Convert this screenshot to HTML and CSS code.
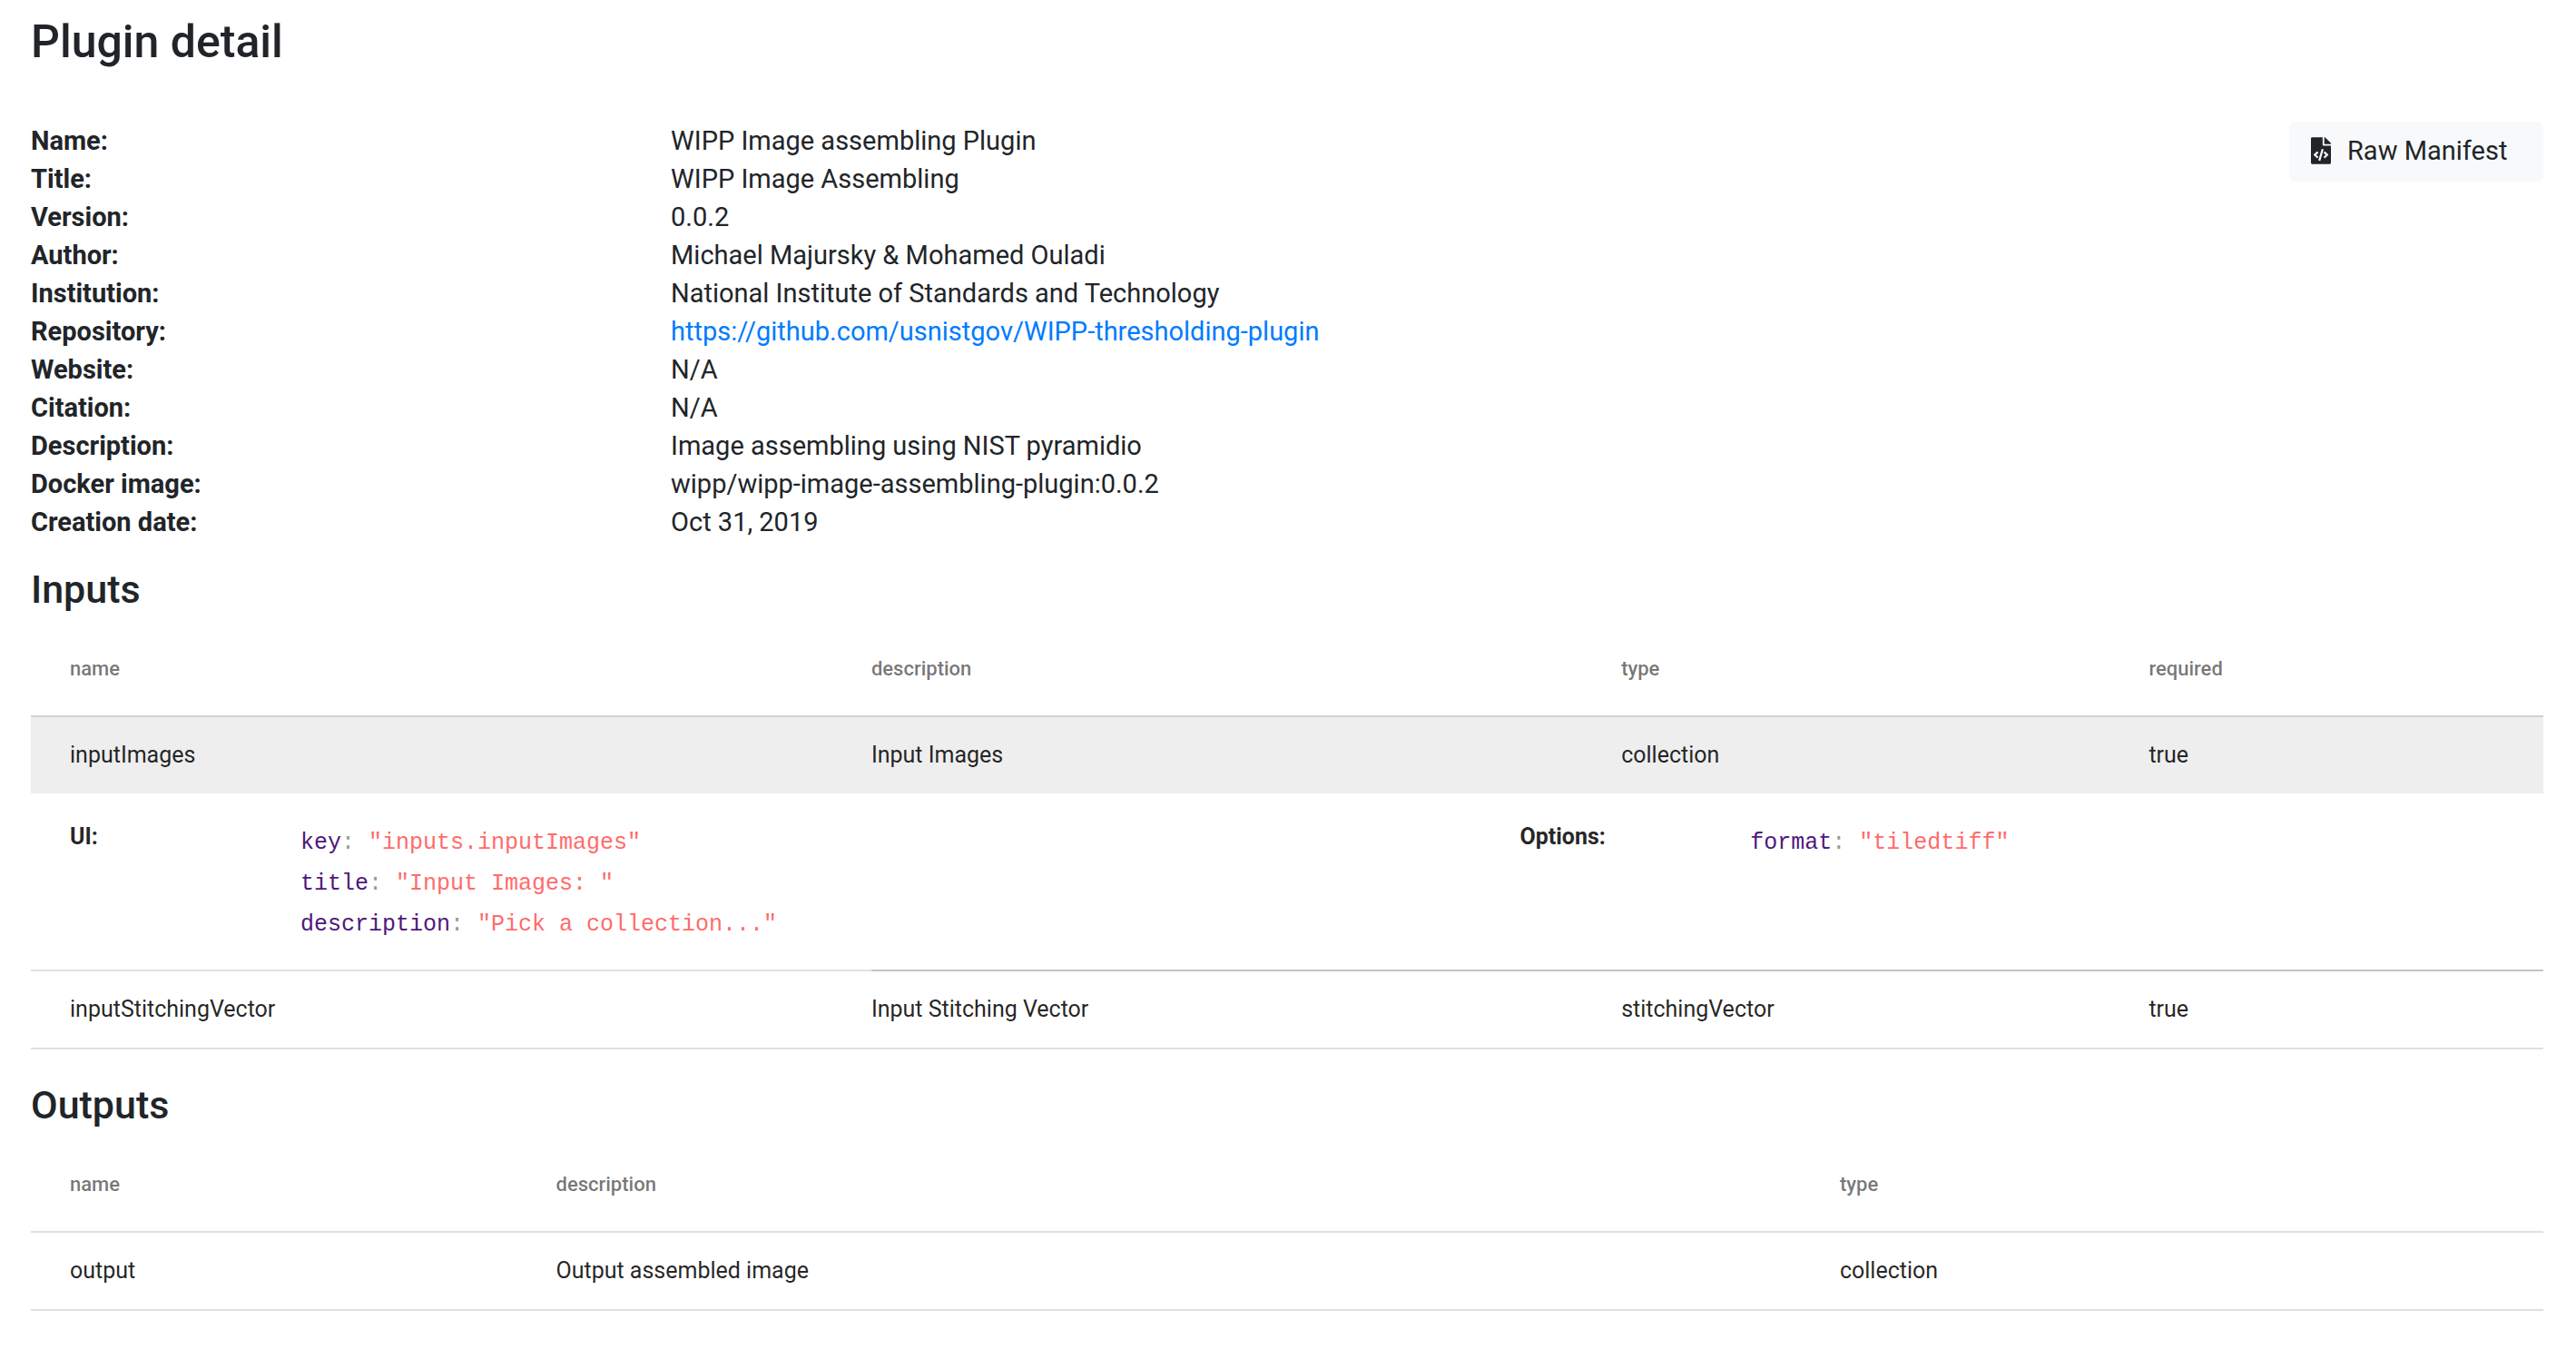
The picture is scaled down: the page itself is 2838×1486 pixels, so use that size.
FILE: index.html
```html
<!DOCTYPE html>
<html lang="en">
<head>
<meta charset="utf-8">
<title>Plugin detail</title>
<link rel="stylesheet" href="styles.css">
</head>
<body>
<main class="page">
  <h1 class="page-title">Plugin detail</h1>

  <section class="summary">
    <dl class="facts">
      <dt>Name:</dt><dd>WIPP Image assembling Plugin</dd>
      <dt>Title:</dt><dd>WIPP Image Assembling</dd>
      <dt>Version:</dt><dd>0.0.2</dd>
      <dt>Author:</dt><dd>Michael Majursky &amp; Mohamed Ouladi</dd>
      <dt>Institution:</dt><dd>National Institute of Standards and Technology</dd>
      <dt>Repository:</dt><dd><a class="link" href="https://github.com/usnistgov/WIPP-thresholding-plugin">https://github.com/usnistgov/WIPP-thresholding-plugin</a></dd>
      <dt>Website:</dt><dd>N/A</dd>
      <dt>Citation:</dt><dd>N/A</dd>
      <dt>Description:</dt><dd>Image assembling using NIST pyramidio</dd>
      <dt>Docker image:</dt><dd>wipp/wipp-image-assembling-plugin:0.0.2</dd>
      <dt>Creation date:</dt><dd>Oct 31, 2019</dd>
    </dl>
    <button class="manifest-button" type="button">
      <svg class="manifest-icon" viewBox="0 0 384 512" aria-hidden="true"><path fill="currentColor" d="M384 121.941V128H256V0h6.059c6.365 0 12.470 2.529 16.971 7.029l97.941 97.941A24.005 24.005 0 0 1 384 121.941zM248 160c-13.200 0-24-10.800-24-24V0H24C10.745 0 0 10.745 0 24v464c0 13.255 10.745 24 24 24h336c13.255 0 24-10.745 24-24V160H248zM123.206 400.505a5.400 5.400 0 0 1-7.633.246l-64.866-60.812a5.400 5.400 0 0 1 0-7.879l64.866-60.812a5.400 5.400 0 0 1 7.633.246l19.579 20.885a5.400 5.400 0 0 1-.372 7.747L101.650 336l40.763 35.874a5.400 5.400 0 0 1 .372 7.747l-19.579 20.884zm51.295 50.479l-27.453-7.970a5.402 5.402 0 0 1-3.681-6.692l61.440-211.626a5.402 5.402 0 0 1 6.692-3.681l27.452 7.970a5.400 5.400 0 0 1 3.680 6.692l-61.440 211.626a5.397 5.397 0 0 1-6.690 3.681zm160.792-111.045l-64.866 60.812a5.400 5.400 0 0 1-7.633-.246l-19.580-20.885a5.400 5.400 0 0 1 .372-7.747L284.350 336l-40.763-35.874a5.400 5.400 0 0 1-.372-7.747l19.580-20.885a5.400 5.400 0 0 1 7.633-.246l64.866 60.812a5.400 5.400 0 0 1-.001 7.879z"/></svg>
      Raw Manifest
    </button>
  </section>

  <section>
    <h2 class="section-title">Inputs</h2>
    <table class="data-table inputs">
      <colgroup><col class="in-name"><col class="in-description"><col class="in-type"><col></colgroup>
      <thead>
        <tr><th scope="col">name</th><th scope="col">description</th><th scope="col">type</th><th scope="col">required</th></tr>
      </thead>
      <tbody>
        <tr class="expanded"><td>inputImages</td><td>Input Images</td><td>collection</td><td>true</td></tr>
        <tr class="detail">
          <td colspan="4">
            <div class="detail-grid">
              <strong>UI:</strong>
              <div class="json">
                <div><span class="key">key</span><span class="colon">:</span> <span class="value">"inputs.inputImages"</span></div>
                <div><span class="key">title</span><span class="colon">:</span> <span class="value">"Input Images: "</span></div>
                <div><span class="key">description</span><span class="colon">:</span> <span class="value">"Pick a collection..."</span></div>
              </div>
              <strong>Options:</strong>
              <div class="json">
                <div><span class="key">format</span><span class="colon">:</span> <span class="value">"tiledtiff"</span></div>
              </div>
            </div>
          </td>
        </tr>
        <tr class="after-detail"><td>inputStitchingVector</td><td>Input Stitching Vector</td><td>stitchingVector</td><td>true</td></tr>
      </tbody>
    </table>
  </section>

  <section>
    <h2 class="section-title">Outputs</h2>
    <table class="data-table">
      <colgroup><col class="out-name"><col class="out-description"><col></colgroup>
      <thead>
        <tr><th scope="col">name</th><th scope="col">description</th><th scope="col">type</th></tr>
      </thead>
      <tbody>
        <tr><td>output</td><td>Output assembled image</td><td>collection</td></tr>
      </tbody>
    </table>
  </section>
</main>
</body>
</html>
```
FILE: styles.css
```css
* { box-sizing: border-box; }

body {
  margin: 0;
  background: #fff;
  color: #212529;
  font: 400 29px/42px Roboto, "Liberation Sans", sans-serif;
}

.page { padding: 16px 36px 40px 34px; }

.page-title {
  margin: 0 0 58px;
  font-size: 50px;
  font-weight: 500;
  line-height: 60px;
}

.summary {
  display: flex;
  align-items: flex-start;
  gap: 40px;
  margin-bottom: 28px;
}

.facts {
  flex: 1;
  display: grid;
  grid-template-columns: 28.8% 1fr;
  margin: 0;
}
.facts dt { font-weight: 700; }
.facts dd { margin: 0; }

.link { color: #007bff; text-decoration: none; }

.manifest-button {
  display: flex;
  align-items: center;
  gap: 18px;
  width: 280px;
  height: 66px;
  padding: 0 24px 2px;
  border: 0;
  border-radius: 7px;
  background: #f8f9fa;
  color: #212529;
  font: inherit;
}
.manifest-icon { width: 22px; height: 30px; }

.section-title {
  margin: 0 0 14px;
  font-size: 43px;
  font-weight: 500;
  line-height: 50px;
}

.data-table {
  width: 100%;
  margin-bottom: 36px;
  table-layout: fixed;
  border-collapse: separate;
  border-spacing: 0;
  color: rgba(0, 0, 0, .87);
  font-size: 25px;
  line-height: 36px;
}
.data-table th {
  height: 102px;
  padding: 0 0 2px;
  border-bottom: 2px solid #e0e0e0;
  color: rgba(0, 0, 0, .54);
  font-size: 22px;
  font-weight: 500;
  text-align: left;
}
.data-table td {
  height: 86px;
  padding: 0;
  border-bottom: 2px solid #e0e0e0;
}
.data-table th:first-child,
.data-table td:first-child { padding-left: 43px; }

.inputs th { border-bottom-color: #d1d1d1; }
.in-name { width: 33.45%; }
.in-description { width: 29.85%; }
.in-type { width: 21%; }
.out-name { width: 20.9%; }
.out-description { width: 51.1%; }

.data-table .expanded td { height: 84px; border-bottom: 0; background: #eee; }
.data-table .detail td {
  height: auto;
  padding-top: 30px;
  padding-bottom: 29px;
  border-bottom: 0;
}
.data-table .after-detail td { height: 88px; border-top: 2px solid #c4c4c4; }
.data-table .after-detail td:first-child { border-top-color: #e0e0e0; }

.detail-grid {
  display: grid;
  grid-template-columns: 254fr 1344fr 254fr 874fr;
}
.detail-grid strong { font-weight: 700; }
.json {
  padding-top: 2px;
  margin-bottom: -2px;
  font: 400 25px/45px "Courier New", "Liberation Mono", monospace;
}
.key { color: #4e187c; }
.colon { color: #999; }
.value { color: #ff6b6b; }
```
